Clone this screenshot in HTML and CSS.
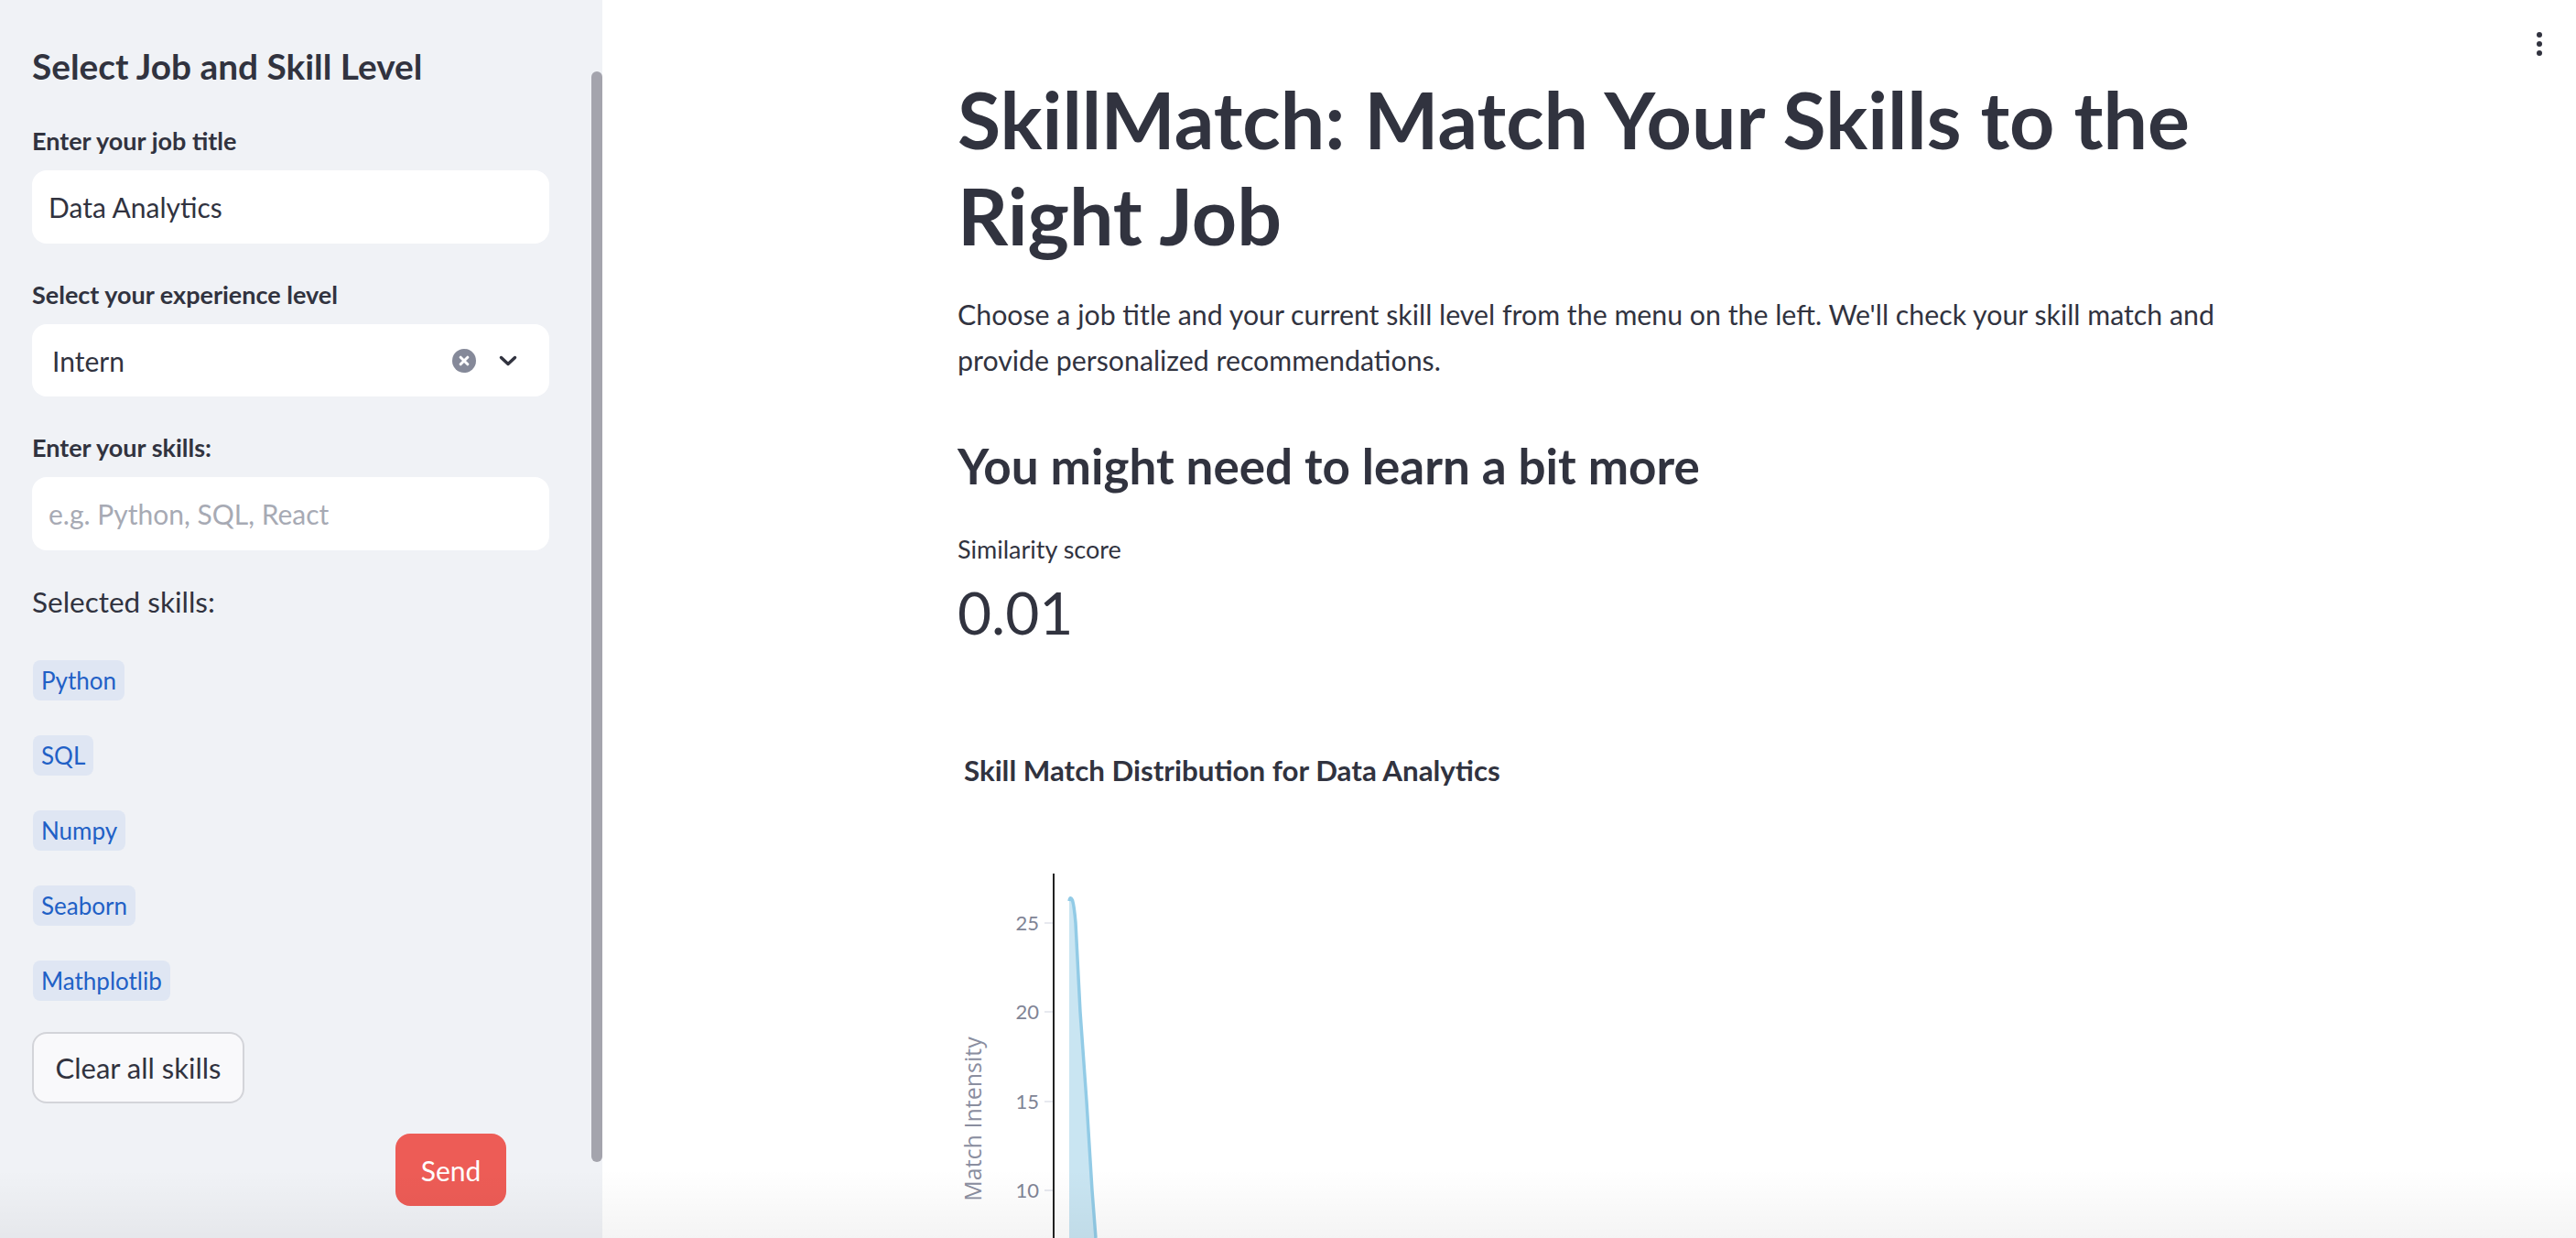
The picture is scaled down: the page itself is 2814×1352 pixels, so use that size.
FILE: index.html
```html
<!DOCTYPE html>
<html lang="en">
<head>
<meta charset="utf-8">
<title>SkillMatch</title>
<link rel="stylesheet" href="styles.css">
</head>
<body>
<div class="app">
  <aside class="sidebar">
    <h2 class="sb-title">Select Job and Skill Level</h2>

    <div class="field first">
      <label class="label">Enter your job title</label>
      <div class="input"><span class="value">Data Analytics</span></div>
    </div>

    <div class="field">
      <label class="label">Select your experience level</label>
      <div class="input select">
        <span class="value">Intern</span>
        <span class="icons">
          <svg class="clear-ic" width="26" height="26" viewBox="0 0 26 26"><circle cx="13" cy="13" r="13" fill="#858999"/><path d="M9.2 9.2 L16.8 16.8 M16.8 9.2 L9.2 16.8" stroke="#fff" stroke-width="3" stroke-linecap="round"/></svg>
          <svg class="chev-ic" width="22" height="14" viewBox="0 0 22 14"><path d="M3.5 3.5 L11 10.5 L18.5 3.5" fill="none" stroke="#31333f" stroke-width="3.5" stroke-linecap="round" stroke-linejoin="round"/></svg>
        </span>
      </div>
    </div>

    <div class="field">
      <label class="label">Enter your skills:</label>
      <div class="input"><span class="placeholder">e.g. Python, SQL, React</span></div>
    </div>

    <p class="selected">Selected skills:</p>

    <div class="chips">
      <span class="chip">Python</span>
      <span class="chip">SQL</span>
      <span class="chip">Numpy</span>
      <span class="chip">Seaborn</span>
      <span class="chip">Mathplotlib</span>
    </div>

    <button class="btn-clear">Clear all skills</button>
    <button class="btn-send">Send</button>

    <div class="scrollbar"></div>
  </aside>

  <main class="main">
    <div class="menu-dots"><span></span><span></span><span></span></div>
    <div class="content">
      <h1 class="title">SkillMatch: Match Your Skills to the Right Job</h1>
      <p class="intro">Choose a job title and your current skill level from the menu on the left. We'll check your skill match and provide personalized recommendations.</p>
      <h3 class="subhead">You might need to learn a bit more</h3>
      <div class="metric-label">Similarity score</div>
      <div class="metric-value">0.01</div>
      <div class="chart-title">Skill Match Distribution for Data Analytics</div>
      <svg class="chart" width="1380" height="472" viewBox="0 0 1380 472">
        <g class="ticks" stroke="#e7e9ef" stroke-width="2">
          <line x1="95" y1="128" x2="104" y2="128"/>
          <line x1="95" y1="225" x2="104" y2="225"/>
          <line x1="95" y1="323" x2="104" y2="323"/>
          <line x1="95" y1="420" x2="104" y2="420"/>
        </g>
        <g class="tick-labels">
          <text x="89" y="136" text-anchor="end">25</text>
          <text x="89" y="233" text-anchor="end">20</text>
          <text x="89" y="331" text-anchor="end">15</text>
          <text x="89" y="428" text-anchor="end">10</text>
        </g>
        <text class="axis-title" transform="translate(26 342) rotate(-90)" text-anchor="middle">Match Intensity</text>
        <path d="M122 472 L122 104 Q123 98 125.5 103 Q127.5 110 129 128 L134 225 L141 323 L147 420 L151 472 Z" fill="#c9e5f2"/>
        <path d="M122 104 Q123 98 125.5 103 Q127.5 110 129 128 L134 225 L141 323 L147 420 L151 472" fill="none" stroke="#92cbe6" stroke-width="3.5" stroke-linejoin="round"/>
        <line x1="105" y1="74" x2="105" y2="472" stroke="#222" stroke-width="2"/>
      </svg>
    </div>
  </main>
  <div class="bottom-fade"></div>
</div>
</body>
</html>
```

FILE: styles.css
```css
* { box-sizing: border-box; }

html, body {
  margin: 0;
  padding: 0;
  height: 100%;
  overflow: hidden;
  background: #ffffff;
  color: #31333f;
  font-family: "Source Sans Pro", Lato, "Noto Sans", sans-serif;
}

.app {
  display: flex;
  height: 100vh;
  position: relative;
}

/* ---------- Sidebar ---------- */
.sidebar {
  position: relative;
  width: 658px;
  flex: none;
  background: #f0f2f6;
  padding: 47px 58px 0 35px;
  display: flex;
  flex-direction: column;
  align-items: flex-start;
}

.sb-title {
  margin: 0;
  font-size: 38.8px;
  line-height: 50px;
  font-weight: 700;
  color: #31333f;
}

.field {
  width: 565px;
  margin-top: 38px;
  display: flex;
  flex-direction: column;
  gap: 14px;
}
.field.first { margin-top: 39px; }

.label {
  font-size: 27px;
  line-height: 36px;
  font-weight: 700;
  color: #31333f;
}

.input {
  height: 80px;
  background: #ffffff;
  border-radius: 16px;
  display: flex;
  align-items: center;
  padding: 0 18px;
  font-size: 30px;
}
.input .value { color: #31333f; }
.input .placeholder { color: #a7aab4; }

.select {
  height: 79px;
  padding: 0 34px 0 22px;
}
.select .value { flex: 1; }
.select .icons {
  display: flex;
  align-items: center;
  gap: 24px;
}
.clear-ic, .chev-ic { display: block; }

.selected {
  margin: 34px 0 0 0;
  font-size: 31.5px;
  line-height: 44px;
  font-weight: 400;
}

.chips {
  margin-top: 42px;
  display: flex;
  flex-direction: column;
  align-items: flex-start;
  gap: 38px;
  padding-left: 1px;
}
.chip {
  height: 44px;
  display: inline-flex;
  align-items: center;
  padding: 0 9px;
  background: #dfe6f3;
  color: #2160c6;
  border-radius: 8px;
  font-size: 26px;
}

.btn-clear {
  margin-top: 34px;
  height: 78px;
  width: 232px;
  padding: 0;
  background: #f9f9fb;
  border: 2px solid #d3d4d9;
  border-radius: 16px;
  font-family: inherit;
  font-size: 31px;
  color: #31333f;
}

.btn-send {
  margin-top: 33px;
  margin-left: 397px;
  height: 79px;
  width: 121px;
  padding: 0;
  background: #ed5c56;
  border: none;
  border-radius: 16px;
  font-family: inherit;
  font-size: 30px;
  color: #ffffff;
}

.scrollbar {
  position: absolute;
  left: 646px;
  top: 78px;
  width: 12px;
  height: 1191px;
  border-radius: 6px;
  background: #a4a4ad;
}

/* ---------- Main ---------- */
.main {
  flex: 1;
  position: relative;
  background: #ffffff;
}

.menu-dots {
  position: absolute;
  top: 35px;
  right: 37px;
  display: flex;
  flex-direction: column;
  gap: 4px;
}
.menu-dots span {
  width: 6px;
  height: 6px;
  border-radius: 50%;
  background: #31333f;
}

.content {
  width: 1380px;
  margin-left: 388px;
  padding-top: 77px;
}

.title {
  margin: 0;
  font-size: 86px;
  line-height: 105px;
  font-weight: 700;
  color: #31333f;
}

.intro {
  margin: 31px 0 0 0;
  font-size: 30.3px;
  line-height: 50px;
}

.subhead {
  margin: 56px 0 0 0;
  font-size: 53px;
  line-height: 70px;
  font-weight: 700;
}

.metric-label {
  margin-top: 38px;
  font-size: 27px;
  line-height: 36px;
}

.metric-value {
  margin-top: 11px;
  font-size: 64px;
  line-height: 80px;
}

.chart-title {
  margin-top: 112px;
  padding-left: 7px;
  font-size: 31.3px;
  line-height: 40px;
  font-weight: 700;
}

.chart {
  display: block;
  margin-top: 19px;
}
.tick-labels text {
  font-family: "Source Sans Pro", Lato, sans-serif;
  font-size: 22px;
  fill: #7f8495;
}
.axis-title {
  font-family: "Open Sans", sans-serif;
  font-size: 25px;
  fill: #8a8e9f;
}

.bottom-fade {
  position: absolute;
  left: 0;
  right: 0;
  bottom: 0;
  height: 75px;
  background: linear-gradient(to bottom, rgba(0,0,0,0), rgba(0,0,0,0.045));
  pointer-events: none;
}
```
